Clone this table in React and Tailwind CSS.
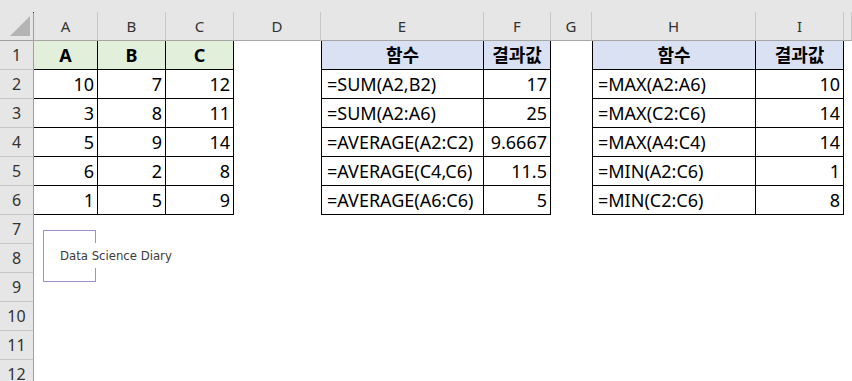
import React from "react";

const COLS = ["A", "B", "C", "D", "E", "F", "G", "H", "I", ""];

// cell spec: [text, kind] kind: 'g' green header, 'b' blue header, 'l' left text, 'r' right number
const DATA = {
  1: { A: ["A", "g"], B: ["B", "g"], C: ["C", "g"], E: ["함수", "b"], F: ["결과값", "b"], H: ["함수", "b"], I: ["결과값", "b"] },
  2: { A: ["10", "r"], B: ["7", "r"], C: ["12", "r"], E: ["=SUM(A2,B2)", "l"], F: ["17", "r"], H: ["=MAX(A2:A6)", "l"], I: ["10", "r"] },
  3: { A: ["3", "r"], B: ["8", "r"], C: ["11", "r"], E: ["=SUM(A2:A6)", "l"], F: ["25", "r"], H: ["=MAX(C2:C6)", "l"], I: ["14", "r"] },
  4: { A: ["5", "r"], B: ["9", "r"], C: ["14", "r"], E: ["=AVERAGE(A2:C2)", "l"], F: ["9.6667", "r"], H: ["=MAX(A4:C4)", "l"], I: ["14", "r"] },
  5: { A: ["6", "r"], B: ["2", "r"], C: ["8", "r"], E: ["=AVERAGE(C4,C6)", "l"], F: ["11.5", "r"], H: ["=MIN(A2:C6)", "l"], I: ["1", "r"] },
  6: { A: ["1", "r"], B: ["5", "r"], C: ["9", "r"], E: ["=AVERAGE(A6:C6)", "l"], F: ["5", "r"], H: ["=MIN(C2:C6)", "l"], I: ["8", "r"] },
};

const TABLE_COLS = ["A", "B", "C", "E", "F", "H", "I"];

function Cell({ row, col }) {
  const inTable = row <= 6 && TABLE_COLS.includes(col);
  const spec = DATA[row] && DATA[row][col];
  let cls = "flex items-center overflow-visible whitespace-nowrap text-black";
  if (inTable) cls += " border-r border-b border-black";
  if (inTable && (col === "E" || col === "H")) cls += " border-l";
  if (spec) {
    const [, kind] = spec;
    if (kind === "g") cls += " bg-[#e2efda] justify-center font-bold";
    if (kind === "b") cls += " bg-[#d9e1f2] justify-center font-bold";
    if (kind === "l") cls += " justify-start pl-[5px]";
    if (kind === "r") cls += " justify-end pr-[3px]";
  }
  return <div className={cls}>{spec ? spec[0] : null}</div>;
}

export default function App() {
  const rows = Array.from({ length: 12 }, (_, i) => i + 1);
  return (
    <div className="relative w-[852px] h-[381px] overflow-hidden bg-white font-['Noto_Sans','Noto_Sans_CJK_KR',sans-serif]">
      <div className="h-[12px] bg-[#e6e6e6]" />
      <div className="grid grid-cols-[34px_64px_68px_68px_87px_163px_67px_41px_164px_88px_1fr] grid-rows-[29px_repeat(12,29px)] text-[18px]">
        {/* corner */}
        <div className="relative bg-[#e6e6e6] border-r border-b border-[#9f9f9f]">
          <svg className="absolute left-0 top-0" width="34" height="29" viewBox="0 0 34 29">
            <polygon points="30,4 30,24 10,24" fill="#b4b4b4" />
          </svg>
          <div className="absolute right-[-1px] top-0 w-px h-px bg-[#333]" />
        </div>
        {COLS.map((c, i) => (
          <div
            key={"h" + i}
            className="flex items-center justify-center bg-[#e6e6e6] border-r border-b border-r-[#c8c8c8] border-b-[#a6a6a6] text-[15px] text-[#333]"
          >
            {c}
          </div>
        ))}
        {rows.map((r) => (
          <React.Fragment key={r}>
            <div className="flex items-center justify-center bg-[#e6e6e6] border-r border-b border-r-[#9f9f9f] border-b-[#c4c4c4] text-[16px] text-[#333]">
              {r}
            </div>
            {COLS.map((c, i) => (
              <Cell key={r + "-" + i} row={r} col={c || "J"} />
            ))}
          </React.Fragment>
        ))}
      </div>

      {/* logo overlay */}
      <div className="absolute left-[43px] top-[230px] w-[53px] h-[52px] border-l border-t border-b border-[#9a92c9]" />
      <div className="absolute left-[95px] top-[230px] w-px h-[13px] bg-[#9a92c9]" />
      <div className="absolute left-[95px] top-[268px] w-px h-[14px] bg-[#9a92c9]" />
      <div className="absolute left-[60px] top-[249px] text-[13px] leading-[13px] text-[#3c3c3c] whitespace-nowrap font-['DejaVu_Sans_Condensed','DejaVu_Sans',sans-serif]">
        Data Science Diary
      </div>
    </div>
  );
}
